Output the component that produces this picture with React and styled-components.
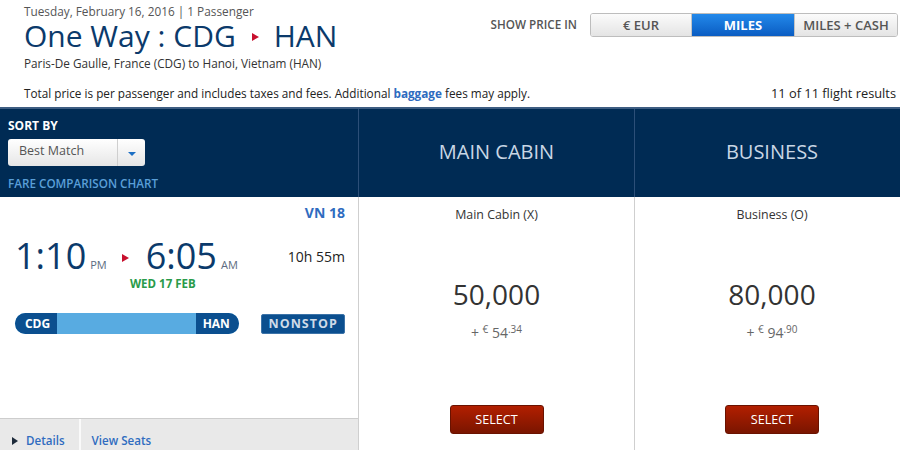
import React from 'react'
import styled, { createGlobalStyle } from 'styled-components'

const GlobalStyle = createGlobalStyle`
  html, body {
    margin: 0;
    padding: 0;
    overflow: hidden;
    background: #fff;
  }
  body {
    font-family: "Open Sans", "DejaVu Sans", sans-serif;
    color: #333;
  }
`

const Page = styled.div`
  width: 900px;
  height: 450px;
  overflow: hidden;
`

const Header = styled.header`
  height: 107px;
  padding: 3px 2px 0 24px;
  box-sizing: border-box;
  display: flex;
  flex-direction: column;
`

const TopRow = styled.div`
  display: flex;
  justify-content: space-between;
  align-items: flex-start;
`

const TripInfo = styled.div`
  display: flex;
  flex-direction: column;
`

const DateLine = styled.div`
  font-size: 11.8px;
  line-height: 16px;
  color: #555;
`

const Title = styled.h1`
  margin: 2px 0 0;
  font-size: 30px;
  line-height: 30px;
  font-weight: 400;
  color: #0b3a6b;
  display: flex;
  align-items: center;
`

const TitleArrow = styled.span`
  width: 0;
  height: 0;
  margin: 2px 15px 0 16px;
  border-top: 4px solid transparent;
  border-bottom: 4px solid transparent;
  border-left: 7px solid #c8102e;
`

const SubLine = styled.div`
  margin-top: 4px;
  font-size: 11.75px;
  line-height: 16px;
  color: #333;
`

const PriceSwitch = styled.div`
  display: flex;
  align-items: center;
  margin-top: 10px;
`

const SwitchLabel = styled.span`
  font-size: 11.7px;
  font-weight: 600;
  color: #555;
  margin-right: 13px;
  margin-top: -3px;
`

const Toggle = styled.div`
  display: flex;
  border: 1px solid #bdbdbd;
  border-radius: 3px;
  overflow: hidden;
`

const ToggleBtn = styled.div`
  width: ${p => p.$w}px;
  height: 22px;
  display: flex;
  align-items: center;
  justify-content: center;
  font-size: 13px;
  font-weight: ${p => (p.$active ? 700 : 600)};
  color: ${p => (p.$active ? '#fff' : '#555')};
  background: ${p =>
    p.$active
      ? 'linear-gradient(#2389ea, #0a5cc2)'
      : 'linear-gradient(#fbfbfb, #e4e4e4)'};
  & + & {
    border-left: 1px solid #c4c4c4;
  }
`

const InfoRow = styled.div`
  margin-top: 14px;
  display: flex;
  justify-content: space-between;
  align-items: baseline;
  font-size: 11.75px;
  line-height: 16px;
  color: #222;
  padding-right: 2px;
`

const Results = styled.span`
  font-size: 12.8px;
`

const Strong = styled.b`
  color: #2e6bc0;
  font-weight: 700;
`

const Band = styled.div`
  display: grid;
  grid-template-columns: 359px 276px 274px;
  height: 90px;
  background: #002b54;
  border-top: 2px solid #3d5d82;
  box-sizing: border-box;
`

const SortCell = styled.div`
  border-right: 1px solid #2c4f78;
  padding: 9px 8px 0 8px;
  display: flex;
  flex-direction: column;
  align-items: flex-start;
`

const SortLabel = styled.div`
  font-size: 12px;
  line-height: 16px;
  font-weight: 700;
  color: #fff;
`

const Select = styled.div`
  margin-top: 5px;
  width: 137px;
  height: 27px;
  box-sizing: border-box;
  border-radius: 3px;
  background: linear-gradient(#ffffff, #e6e6e6);
  display: flex;
  align-items: stretch;
  font-size: 12.5px;
  color: #555;
`

const SelectText = styled.div`
  flex: 1;
  padding: 3px 0 0 11px;
  border-right: 1px solid #cfcfcf;
`

const SelectArrow = styled.div`
  width: 27px;
  display: flex;
  align-items: center;
  justify-content: center;
  &::after {
    content: '';
    margin-top: 2px;
    border-left: 4px solid transparent;
    border-right: 4px solid transparent;
    border-top: 4px solid #1c6fc4;
  }
`

const ChartLink = styled.div`
  margin-top: 9px;
  font-size: 11.7px;
  line-height: 16px;
  font-weight: 600;
  color: #5a9fd8;
`

const CabinHead = styled.div`
  display: flex;
  align-items: center;
  justify-content: center;
  padding-bottom: 4px;
  font-size: 20px;
  color: #c9d7e5;
  border-right: ${p => (p.$divider ? '1px solid #2c4f78' : 'none')};
`

const FlightRow = styled.div`
  display: grid;
  grid-template-columns: 359px 276px 274px;
  height: 253px;
  overflow: hidden;
`

const FlightPanel = styled.div`
  border-right: 1px solid #cfcfcf;
  display: flex;
  flex-direction: column;
`

const FlightInfo = styled.div`
  height: 221px;
  padding: 6px 13px 0 15px;
  box-sizing: border-box;
`

const FlightNo = styled.div`
  text-align: right;
  font-size: 14px;
  line-height: 20px;
  font-weight: 700;
  color: #2f6cc0;
`

const TimeRow = styled.div`
  margin-top: 15px;
  height: 36px;
  display: flex;
  align-items: flex-start;
`

const TimeGroup = styled.div`
  display: flex;
  align-items: baseline;
`

const Time = styled.span`
  font-size: 36px;
  line-height: 36px;
  color: #0b3a6b;
`

const Meridiem = styled.span`
  margin-left: 4px;
  font-size: 11px;
  color: #5b6b80;
`

const RouteArrow = styled.span`
  margin: 16px 17px 0 15px;
  width: 0;
  height: 0;
  border-top: 4px solid transparent;
  border-bottom: 4px solid transparent;
  border-left: 7px solid #c8102e;
`

const Duration = styled.span`
  margin-left: auto;
  margin-top: 9px;
  font-size: 14px;
  line-height: 20px;
  color: #222;
`

const DateNote = styled.div`
  margin-top: 2px;
  margin-left: 115px;
  font-size: 11.5px;
  line-height: 16px;
  font-weight: 700;
  color: #2a9b4a;
`

const RouteRow = styled.div`
  margin-top: 21px;
  display: flex;
  align-items: center;
`

const RouteBar = styled.div`
  width: 225px;
  height: 21px;
  border-radius: 11px;
  overflow: hidden;
  display: flex;
  background: #58abe1;
  justify-content: space-between;
`

const Airport = styled.span`
  width: ${p => p.$w}px;
  display: flex;
  align-items: center;
  justify-content: center;
  background: #0b4f8f;
  color: #fff;
  font-size: 12px;
  font-weight: 700;
  padding-${p => p.$side}: 3px;
`

const Nonstop = styled.span`
  margin-left: 22px;
  width: 84px;
  height: 20px;
  box-sizing: border-box;
  border: 1px solid #3c73a8;
  border-radius: 2px;
  background: #0b4f8f;
  display: flex;
  align-items: center;
  justify-content: center;
  font-size: 12.5px;
  font-weight: 700;
  letter-spacing: 1px;
  color: #cfdbe8;
`

const BottomBar = styled.div`
  flex: 1;
  display: flex;
  background: #e9e9e9;
  border-top: 1px solid #cdcdcd;
`

const BarLink = styled.div`
  display: flex;
  align-items: flex-start;
  padding: 13px ${p => p.$pr}px 0 ${p => p.$pl}px;
  font-size: 11.6px;
  line-height: 18px;
  font-weight: 600;
  color: #2f6cc0;
  border-right: ${p => (p.$divider ? '2px solid #fafafa' : 'none')};
`

const Caret = styled.span`
  margin: 5px 8px 0 0;
  border-top: 4px solid transparent;
  border-bottom: 4px solid transparent;
  border-left: 6px solid #1d2a3a;
`

const FareCell = styled.div`
  display: flex;
  flex-direction: column;
  align-items: center;
  padding: 9px 0 16px;
  border-right: ${p => (p.$divider ? '1px solid #cfcfcf' : 'none')};
`

const FareName = styled.div`
  font-size: 12.4px;
  line-height: 18px;
  color: #333;
`

const Miles = styled.div`
  margin-top: 53px;
  font-size: 28px;
  line-height: 34px;
  color: #333;
`

const Taxes = styled.div`
  margin-top: 9px;
  font-size: 14px;
  line-height: 18px;
  color: #666;
  sup {
    font-size: 10px;
    vertical-align: 5px;
  }
`

const SelectBtn = styled.button`
  margin-top: auto;
  width: 94px;
  height: 29px;
  border: 1px solid #6a1200;
  border-radius: 3px;
  background: linear-gradient(#b21f00, #7a1500);
  color: #fff;
  font-family: inherit;
  font-size: 12.6px;
  cursor: pointer;
`

const fares = [
  { name: 'Main Cabin (X)', miles: '50,000', whole: '54', cents: '34' },
  { name: 'Business (O)', miles: '80,000', whole: '94', cents: '90' }
]

const App = () => {
  return (
    <Page>
      <GlobalStyle />
      <Header>
        <TopRow>
          <TripInfo>
            <DateLine>Tuesday, February 16, 2016 | 1 Passenger</DateLine>
            <Title>
              One Way : CDG<TitleArrow />HAN
            </Title>
            <SubLine>Paris-De Gaulle, France (CDG) to Hanoi, Vietnam (HAN)</SubLine>
          </TripInfo>
          <PriceSwitch>
            <SwitchLabel>SHOW PRICE IN</SwitchLabel>
            <Toggle>
              <ToggleBtn $w={100}>€ EUR</ToggleBtn>
              <ToggleBtn $w={102} $active>MILES</ToggleBtn>
              <ToggleBtn $w={102}>MILES + CASH</ToggleBtn>
            </Toggle>
          </PriceSwitch>
        </TopRow>
        <InfoRow>
          <span>
            Total price is per passenger and includes taxes and fees. Additional{' '}
            <Strong>baggage</Strong> fees may apply.
          </span>
          <Results>11 of 11 flight results</Results>
        </InfoRow>
      </Header>

      <Band>
        <SortCell>
          <SortLabel>SORT BY</SortLabel>
          <Select>
            <SelectText>Best Match</SelectText>
            <SelectArrow />
          </Select>
          <ChartLink>FARE COMPARISON CHART</ChartLink>
        </SortCell>
        <CabinHead $divider>MAIN CABIN</CabinHead>
        <CabinHead>BUSINESS</CabinHead>
      </Band>

      <FlightRow>
        <FlightPanel>
          <FlightInfo>
            <FlightNo>VN 18</FlightNo>
            <TimeRow>
              <TimeGroup>
                <Time>1:10</Time>
                <Meridiem>PM</Meridiem>
              </TimeGroup>
              <RouteArrow />
              <TimeGroup>
                <Time>6:05</Time>
                <Meridiem>AM</Meridiem>
              </TimeGroup>
              <Duration>10h 55m</Duration>
            </TimeRow>
            <DateNote>WED 17 FEB</DateNote>
            <RouteRow>
              <RouteBar>
                <Airport $w={39} $side='left'>CDG</Airport>
                <Airport $w={40} $side='right'>HAN</Airport>
              </RouteBar>
              <Nonstop>NONSTOP</Nonstop>
            </RouteRow>
          </FlightInfo>
          <BottomBar>
            <BarLink $pl={12} $pr={14} $divider>
              <Caret />
              Details
            </BarLink>
            <BarLink $pl={11} $pr={14}>View Seats</BarLink>
          </BottomBar>
        </FlightPanel>

        {fares.map((f, i) => (
          <FareCell key={f.name} $divider={i === 0}>
            <FareName>{f.name}</FareName>
            <Miles>{f.miles}</Miles>
            <Taxes>
              + <sup>€</sup> {f.whole}
              <sup>.{f.cents}</sup>
            </Taxes>
            <SelectBtn>SELECT</SelectBtn>
          </FareCell>
        ))}
      </FlightRow>
    </Page>
  )
}

export default App
